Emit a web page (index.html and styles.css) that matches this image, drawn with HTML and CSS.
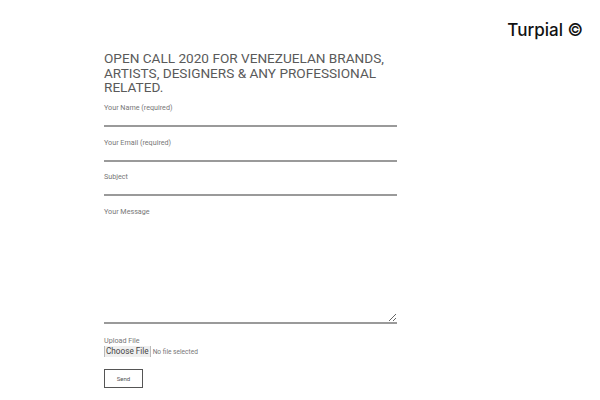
FILE: index.html
```html
<!DOCTYPE html>
<html>
<head>
<meta charset="utf-8">
<link rel="stylesheet" href="styles.css">
</head>
<body>
<header class="top">
  <div class="brand">Turpial ©</div>
</header>
<main class="main">
  <h1 class="title">OPEN CALL 2020 FOR VENEZUELAN BRANDS, ARTISTS, DESIGNERS &amp; ANY PROFESSIONAL RELATED.</h1>
  <form class="form">
    <label class="field">
      <span class="label">Your Name (required)</span>
      <input class="input" type="text">
    </label>
    <label class="field">
      <span class="label">Your Email (required)</span>
      <input class="input" type="email">
    </label>
    <label class="field">
      <span class="label">Subject</span>
      <input class="input" type="text">
    </label>
    <label class="field">
      <span class="label">Your Message</span>
      <textarea class="input area"></textarea>
    </label>
    <div class="field upload">
      <span class="label">Upload File</span>
      <label class="file">
        <input class="file-input" type="file">
        <span class="file-btn">Choose File</span>
        <span class="file-name">No file selected</span>
      </label>
    </div>
    <div class="actions">
      <button class="send" type="button">Send</button>
    </div>
  </form>
</main>
</body>
</html>
```
FILE: styles.css
```css
html, body {
  margin: 0;
  padding: 0;
  background: #fff;
}
body {
  width: 600px;
  height: 400px;
  overflow: hidden;
  font-family: Roboto, "Noto Sans", sans-serif;
  color: #555;
}
.top {
  display: flex;
  justify-content: flex-end;
  padding: 20px 17px 0 0;
  height: 22px;
}
.brand {
  font-family: Inter, sans-serif;
  font-size: 17px;
  font-weight: 500;
  color: #111;
  line-height: 20px;
}
.main {
  padding: 9px 0 0 104px;
  width: 293px;
}
.title {
  margin: 0;
  font-weight: 400;
  font-size: 13.6px;
  line-height: 14.5px;
  color: #5a5a5a;
  width: 300px;
}
.form {
  display: flex;
  flex-direction: column;
  margin-top: 8.5px;
}
.field {
  display: flex;
  flex-direction: column;
  margin-bottom: 10.5px;
}
.label {
  font-size: 7.2px;
  line-height: 9px;
  color: #777;
}
.input {
  display: block;
  border: none;
  border-bottom: 2px solid #9a9a9a;
  height: 13px;
  padding: 0;
  margin: 0;
  outline: none;
  background: transparent;
  width: 293px;
  box-sizing: content-box;
  font-family: inherit;
}
.area {
  height: 106px;
  resize: vertical;
}
.upload {
  margin-top: 2px;
  margin-bottom: 12px;
}
.file {
  display: flex;
  align-items: center;
  gap: 2px;
  margin-top: 1px;
}
.file-input {
  display: none;
}
.file-btn {
  font-size: 8.2px;
  line-height: 11px;
  color: #444;
  background: #efefef;
  border-left: 1px solid #bbb;
  border-right: 1px solid #bbb;
  padding: 0 1px;
}
.file-name {
  font-size: 6.6px;
  color: #777;
}
.actions {
  display: flex;
}
.send {
  width: 39px;
  height: 19px;
  border: 1px solid #555;
  background: #fff;
  font-family: inherit;
  font-size: 6px;
  color: #555;
  padding: 0;
  margin: 0;
}
```
